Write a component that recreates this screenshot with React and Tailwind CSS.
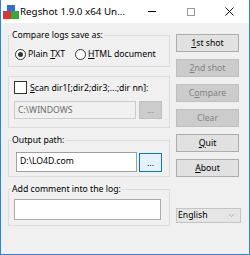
import { ChevronDown } from "lucide-react";

const font = { fontFamily: '"Noto Sans", "Open Sans", sans-serif' };

function Btn({ children, disabled }) {
  return (
    <button
      className={`h-[18px] w-[63px] border text-[8.7px] leading-none ${
        disabled
          ? "bg-[#cccccc] border-[#bfbfbf] text-[#838383]"
          : "bg-[#e1e1e1] border-[#adadad] text-black"
      }`}
    >
      {children}
    </button>
  );
}

function Radio({ checked }) {
  return (
    <span className="w-[11px] h-[11px] rounded-full border border-[#333] bg-white flex items-center justify-center">
      {checked && <span className="w-[5px] h-[5px] rounded-full bg-[#333]" />}
    </span>
  );
}

export default function App() {
  return (
    <div style={font} className="w-[250px] h-[255px] flex flex-col bg-[#f0f0f0] border-l border-r border-b border-[#2b88d8] text-black">
      {/* Title bar */}
      <div className="h-[23px] bg-white flex items-center shrink-0 whitespace-nowrap">
        <svg width="16" height="14" viewBox="0 0 16 14" className="ml-[2px] shrink-0">
          <rect x="4" y="0" width="8" height="7" fill="#2f6fd6" />
          <rect x="0" y="6" width="8" height="8" fill="#e0342b" />
          <rect x="8" y="6" width="8" height="8" fill="#36a83a" />
        </svg>
        <span className="ml-[1px] text-[9.8px] leading-none">Regshot 1.9.0 x64 Un...</span>
        <div className="ml-auto flex items-center shrink-0">
          <span className="w-[39px] flex justify-center">
            <span className="w-[8px] h-px bg-black" />
          </span>
          <span className="w-[39px] flex justify-center">
            <span className="w-[8px] h-[8px] border border-[#999]" />
          </span>
          <span className="w-[39px] flex justify-center">
            <svg width="9" height="9" viewBox="0 0 9 9">
              <path d="M0.5 0.5L8.5 8.5M8.5 0.5L0.5 8.5" stroke="#111" strokeWidth="1" />
            </svg>
          </span>
        </div>
      </div>

      {/* Body */}
      <div className="flex flex-1 text-[8.7px] leading-[12px]">
        <div className="w-[162px] ml-[7px] flex flex-col">
          <fieldset className="mt-[6px] h-[38px] border border-[#dcdcdc]">
            <legend className="ml-[2px] px-[1px]">Compare logs save as:</legend>
            <div className="flex items-center mt-[7px] px-[6px]">
              <Radio checked />
              <span className="ml-[2px]">
                Plain <u>T</u>XT
              </span>
              <span className="ml-[10px]">
                <Radio />
              </span>
              <span className="ml-[2px]">
                <u>H</u>TML document
              </span>
            </div>
          </fieldset>

          <div className="mt-[9px] h-[52px] border border-[#dcdcdc] pl-[5px] pr-[6px]">
            <div className="flex items-center mt-[4px]">
              <span className="w-[13px] h-[13px] border border-[#333] bg-white" />
              <span className="ml-[3px]">
                <u>S</u>can dir1[;dir2;dir3;...;dir nn]:
              </span>
            </div>
            <div className="flex mt-[7px] gap-[3px]">
              <div className="w-[122px] h-[18px] border border-[#cccccc] bg-[#f0f0f0] text-[#6d6d6d] pl-[3px] flex items-center">
                C:\WINDOWS
              </div>
              <div className="w-[23px] h-[18px] border border-[#bfbfbf] bg-[#cccccc] text-[#838383] flex items-center justify-center">
                ...
              </div>
            </div>
          </div>

          <fieldset className="mt-[6px] h-[43px] border border-[#dcdcdc]">
            <legend className="ml-[2px] px-[1px]">Output path:</legend>
            <div className="flex items-end mt-[6px] gap-[2px] pl-[7px]">
              <div className="w-[121px] h-[20px] border border-[#a0a0a0] bg-white pl-[3px] pt-[2px]">
                D:\LO4D.com
              </div>
              <div className="w-[23px] h-[19px] border border-[#0078d7] bg-[#e5f1fb] flex items-center justify-center">
                ...
              </div>
            </div>
          </fieldset>

          <fieldset className="mt-[6px] h-[43px] border border-[#dcdcdc]">
            <legend className="ml-[2px] px-[1px]">Add comment into the log:</legend>
            <div className="mt-[4px] ml-[5px] w-[147px] h-[21px] border border-[#ababab] bg-white" />
          </fieldset>
        </div>

        <div className="ml-[6px] flex flex-col">
          <div className="mt-[11px] flex flex-col gap-[7px]">
            <Btn>
              <u>1</u>st shot
            </Btn>
            <Btn disabled>
              <u>2</u>nd shot
            </Btn>
            <Btn disabled>
              C<u>o</u>mpare
            </Btn>
            <Btn disabled>Clear</Btn>
            <Btn>
              <u>Q</u>uit
            </Btn>
            <Btn>
              <u>A</u>bout
            </Btn>
          </div>
          <div className="mt-[31px] w-[65px] h-[15px] border border-[#c4c4c4] bg-[#e5e5e5] flex items-center pl-[1px]">
            <span className="leading-none">English</span>
            <ChevronDown className="ml-auto mr-[4px] text-[#888]" size={9} strokeWidth={1.5} />
          </div>
        </div>
      </div>
    </div>
  );
}
